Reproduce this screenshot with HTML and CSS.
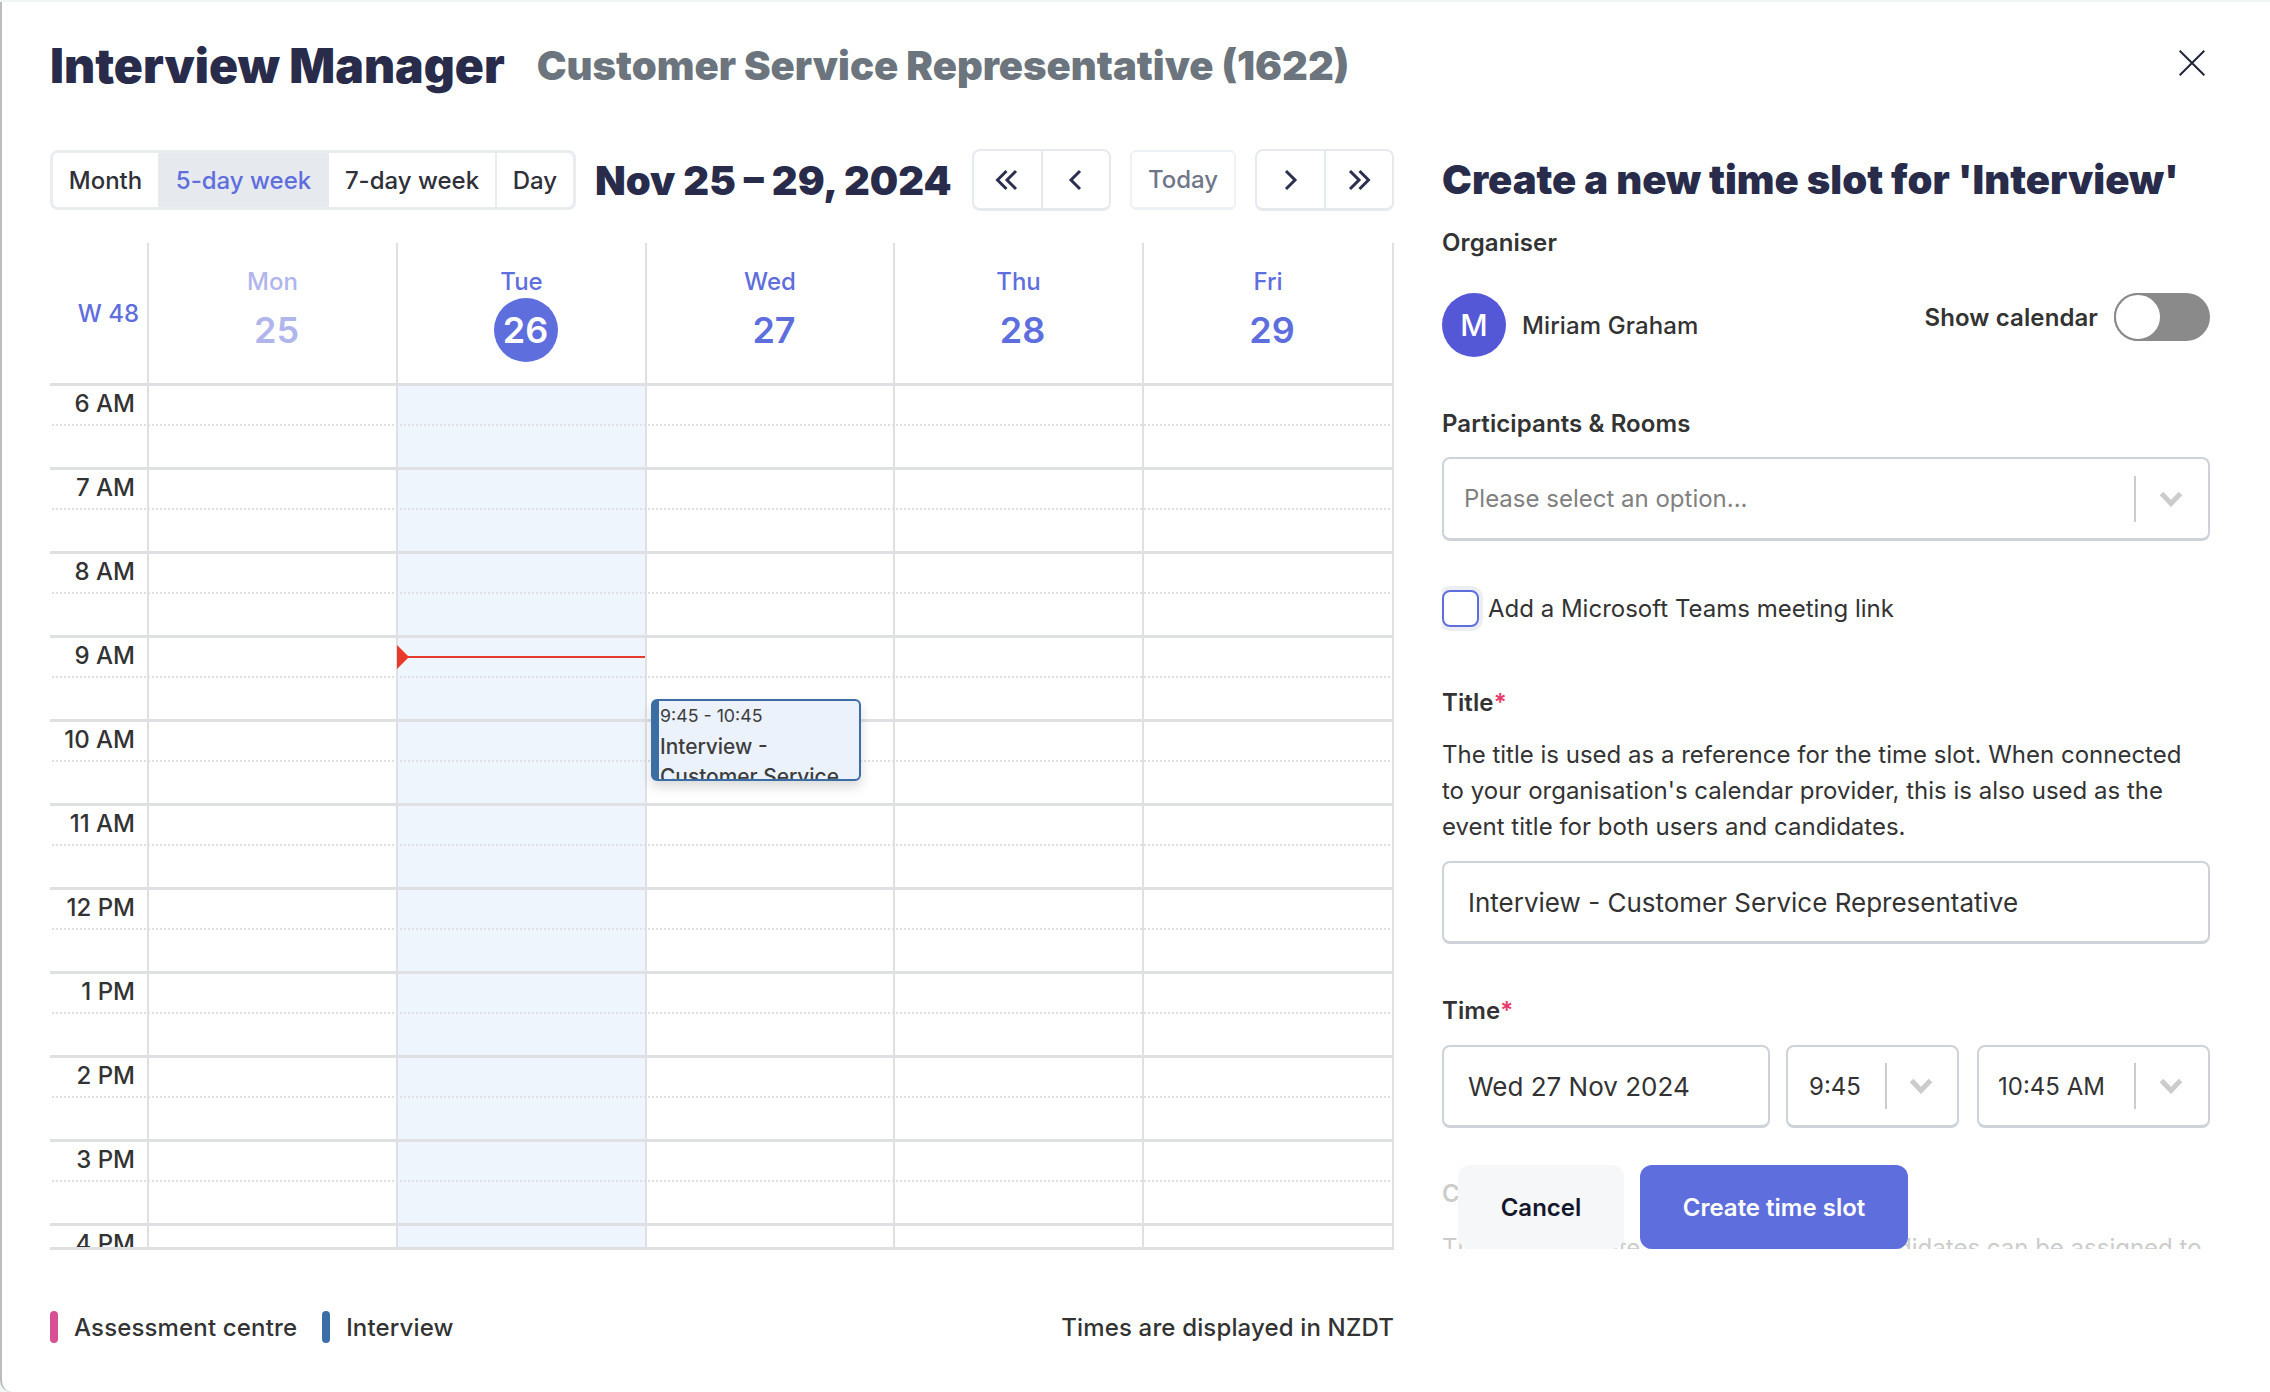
FILE: index.html
```html
<!DOCTYPE html>
<html lang="en">
<head>
<meta charset="utf-8">
<title>Interview Manager</title>
<link rel="stylesheet" href="styles.css">
</head>
<body>
<div class="modal">
  <header class="top">
    <h1 class="title">Interview Manager</h1>
    <span class="subtitle">Customer Service Representative (1622)</span>
    <button class="close" aria-label="Close">
      <svg viewBox="0 0 26 26" width="26" height="26"><path d="M.7.7 25.300 25.300M25.300.7.7 25.300" fill="none" stroke="#22263a" stroke-width="2"/></svg>
    </button>
  </header>
  <div class="content">
    <section class="left">
      <div class="toolbar">
        <div class="seg">
          <span class="seg-item seg-month">Month</span>
          <span class="seg-item seg-active">5-day week</span>
          <span class="seg-item seg-seven">7-day week</span>
          <span class="seg-item seg-day">Day</span>
        </div>
        <h2 class="range">Nov 25 – 29, 2024</h2>
        <div class="navs">
          <div class="nav">
            <span class="nav-btn"><svg viewBox="0 0 24 24" width="24" height="24"><path d="M11.500 3 2.500 12l9 9M21 3l-9 9 9 9" class="chev-dark"/></svg></span>
            <span class="nav-btn"><svg viewBox="0 0 24 24" width="24" height="24"><path d="m16 3-9 9 9 9" class="chev-dark"/></svg></span>
          </div>
          <span class="today">Today</span>
          <div class="nav">
            <span class="nav-btn"><svg viewBox="0 0 24 24" width="24" height="24"><path d="m8 3 9 9-9 9" class="chev-dark"/></svg></span>
            <span class="nav-btn"><svg viewBox="0 0 24 24" width="24" height="24"><path d="m3 3 9 9-9 9M12.500 3l9 9-9 9" class="chev-dark"/></svg></span>
          </div>
        </div>
      </div>
      <div class="cal">
        <div class="cal-head">
          <div class="week">W 48</div>
          <div class="day past"><span class="dname">Mon</span><span class="dnum">25</span></div>
          <div class="day"><span class="dname">Tue</span><span class="dnum now">26</span></div>
          <div class="day"><span class="dname">Wed</span><span class="dnum">27</span></div>
          <div class="day"><span class="dname">Thu</span><span class="dnum">28</span></div>
          <div class="day"><span class="dname">Fri</span><span class="dnum">29</span></div>
        </div>
        <div class="cal-body">
          <div class="row"><div class="hour">6 AM</div><div class="cell"></div><div class="cell tcol"></div><div class="cell"></div><div class="cell"></div><div class="cell"></div></div>
          <div class="row"><div class="hour">7 AM</div><div class="cell"></div><div class="cell tcol"></div><div class="cell"></div><div class="cell"></div><div class="cell"></div></div>
          <div class="row"><div class="hour">8 AM</div><div class="cell"></div><div class="cell tcol"></div><div class="cell"></div><div class="cell"></div><div class="cell"></div></div>
          <div class="row"><div class="hour">9 AM</div><div class="cell"></div><div class="cell tcol"></div><div class="cell"></div><div class="cell"></div><div class="cell"></div></div>
          <div class="row"><div class="hour">10 AM</div><div class="cell"></div><div class="cell tcol"></div><div class="cell"></div><div class="cell"></div><div class="cell"></div></div>
          <div class="row"><div class="hour">11 AM</div><div class="cell"></div><div class="cell tcol"></div><div class="cell"></div><div class="cell"></div><div class="cell"></div></div>
          <div class="row"><div class="hour">12 PM</div><div class="cell"></div><div class="cell tcol"></div><div class="cell"></div><div class="cell"></div><div class="cell"></div></div>
          <div class="row"><div class="hour">1 PM</div><div class="cell"></div><div class="cell tcol"></div><div class="cell"></div><div class="cell"></div><div class="cell"></div></div>
          <div class="row"><div class="hour">2 PM</div><div class="cell"></div><div class="cell tcol"></div><div class="cell"></div><div class="cell"></div><div class="cell"></div></div>
          <div class="row"><div class="hour">3 PM</div><div class="cell"></div><div class="cell tcol"></div><div class="cell"></div><div class="cell"></div><div class="cell"></div></div>
          <div class="row"><div class="hour">4 PM</div><div class="cell"></div><div class="cell tcol"></div><div class="cell"></div><div class="cell"></div><div class="cell"></div></div>
          <div class="nowline"></div>
          <div class="event">
            <div class="ev-time">9:45 - 10:45</div>
            <div class="ev-title">Interview - Customer Service Representative</div>
          </div>
        </div>
      </div>
      <footer class="legend">
        <span class="key"><i class="bar bar-pink"></i>Assessment centre</span>
        <span class="key"><i class="bar bar-blue"></i>Interview</span>
        <span class="tz">Times are displayed in NZDT</span>
      </footer>
    </section>
    <section class="right">
      <h2 class="form-title">Create a new time slot for 'Interview'</h2>
      <div class="label org-label">Organiser</div>
      <div class="org">
        <span class="avatar">M</span>
        <span class="org-name">Miriam Graham</span>
        <span class="show">Show calendar</span>
        <span class="toggle"><span class="knob"></span></span>
      </div>
      <div class="label part-label">Participants &amp; Rooms</div>
      <div class="field select">
        <span class="ph">Please select an option...</span>
        <span class="sep"></span>
        <svg class="chev" viewBox="0 0 24 16" width="24" height="16"><path d="m2.500 2.500 9.500 10 9.500-10"/></svg>
      </div>
      <label class="check"><span class="box"></span>Add a Microsoft Teams meeting link</label>
      <div class="label title-label">Title<span class="req">*</span></div>
      <p class="desc">The title is used as a reference for the time slot. When connected to your organisation's calendar provider, this is also used as the event title for both users and candidates.</p>
      <div class="field text-field">Interview - Customer Service Representative</div>
      <div class="label time-label">Time<span class="req">*</span></div>
      <div class="time-row">
        <div class="field date">Wed 27 Nov 2024</div>
        <div class="field start"><span class="val">9:45</span><span class="sep"></span><svg class="chev" viewBox="0 0 24 16" width="24" height="16"><path d="m2.500 2.500 9.500 10 9.500-10"/></svg></div>
        <div class="field end"><span class="val">10:45 AM</span><span class="sep"></span><svg class="chev" viewBox="0 0 24 16" width="24" height="16"><path d="m2.500 2.500 9.500 10 9.500-10"/></svg></div>
      </div>
      <div class="faded-head">Candidates</div>
      <p class="faded-text">The slot to create determines which candidates can be assigned to</p>
      <div class="actions">
        <button class="btn cancel">Cancel</button>
        <button class="btn create">Create time slot</button>
      </div>
    </section>
  </div>
</div>
</body>
</html>
```

FILE: styles.css
```css
* { box-sizing: border-box; }
html, body { margin: 0; padding: 0; }
body {
  width: 2270px;
  height: 1392px;
  overflow: hidden;
  background: #eef5f3;
  font-family: Inter, "Liberation Sans", sans-serif;
  color: #333;
}
.modal {
  width: 2270px;
  height: 1390px;
  margin-top: 2px;
  background: #fff;
  border-left: 2px solid #bdbdbd;
  border-bottom-left-radius: 12px;
  padding: 0 60px 0 48px;
  display: flex;
  flex-direction: column;
}
.top {
  height: 146px;
  padding-top: 38px;
  display: flex;
  align-items: flex-start;
  position: relative;
}
.title {
  margin: 0;
  font-size: 48px;
  line-height: 52px;
  font-weight: 900;
  color: #282c4a;
}
.subtitle {
  margin-left: 32px;
  font-size: 40px;
  line-height: 52px;
  font-weight: 900;
  color: #6c757d;
}
.close {
  position: absolute;
  left: 2129px;
  top: 48px;
  border: 0;
  padding: 0;
  background: none;
  line-height: 0;
}
.content {
  display: flex;
  gap: 48px;
  flex: 1;
  min-height: 0;
}
.left { width: 1344px; }
.toolbar {
  display: flex;
  align-items: center;
  height: 64px;
  margin-bottom: 31px;
}
.seg {
  display: flex;
  height: 60px;
  width: 526px;
  border: 3px solid #e9edf0;
  border-radius: 8px;
  overflow: hidden;
  font-size: 24px;
  font-weight: 500;
  color: #2f3038;
}
.seg-item { display: flex; align-items: center; justify-content: center; }
.seg-month { width: 105px; }
.seg-active { width: 171px; background: #e6eaee; color: #5f6edd; }
.seg-seven { width: 168px; border-right: 2px solid #e9edf0; }
.seg-day { flex: 1; }
.range {
  margin: 0 0 0 19px;
  font-size: 40px;
  font-weight: 900;
  color: #282c4a;
  white-space: nowrap;
}
.navs { margin-left: auto; display: flex; gap: 19px; align-items: center; }
.nav {
  display: flex;
  width: 139px;
  height: 62px;
  border: 2px solid #e6eaef;
  border-bottom-width: 3px;
  border-radius: 8px;
}
.nav-btn { flex: 1; display: flex; align-items: center; justify-content: center; }
.nav-btn + .nav-btn { border-left: 2px solid #e6eaef; }
.chev-dark { fill: none; stroke: #2c3050; stroke-width: 3; }
.today {
  width: 106px;
  height: 60px;
  border: 2px solid #eef1f5;
  border-bottom-width: 3px;
  border-radius: 6px;
  display: flex;
  align-items: center;
  justify-content: center;
  font-size: 24px;
  font-weight: 500;
  color: #70768a;
}
.cal-head {
  display: grid;
  grid-template-columns: 97px 249px 249px 248px 249px 252px;
  height: 140px;
}
.week {
  font-size: 24px;
  font-weight: 500;
  color: #5f6edd;
  text-align: right;
  padding: 56px 8px 0 0;
}
.day {
  border-left: 2px solid #dfe0e3;
  display: flex;
  flex-direction: column;
  align-items: center;
  padding-top: 24px;
  color: #5f6edd;
}
.day:last-child { border-right: 2px solid #dfe0e3; }
.past { color: #b0b5ec; }
.dname { font-size: 24px; line-height: 30px; font-weight: 500; }
.dnum {
  width: 64px;
  height: 64px;
  margin: 1px 0 0 8px;
  display: flex;
  align-items: center;
  justify-content: center;
  font-size: 36px;
  font-weight: 600;
  border-radius: 50%;
}
.now { background: #5f6edd; color: #fff; }
.cal-body {
  position: relative;
  height: 867px;
  overflow: hidden;
  border-bottom: 3px solid #dfe0e3;
}
.row {
  position: relative;
  display: grid;
  grid-template-columns: 97px 249px 249px 248px 249px 252px;
  height: 84px;
  border-top: 3px solid #dfe0e3;
}
.row::after {
  content: "";
  position: absolute;
  left: 2px;
  right: 0;
  top: 38px;
  border-top: 2px dotted #dfe0e3;
}
.hour {
  font-size: 24px;
  line-height: 30px;
  font-weight: 500;
  text-align: right;
  padding: 3px 12px 0 0;
  color: #333;
}
.cell { border-left: 2px solid #dfe0e3; }
.cell:last-child { border-right: 2px solid #dfe0e3; }
.tcol { background: #eef5fc; }
.nowline {
  position: absolute;
  left: 347px;
  top: 273px;
  width: 248px;
  height: 2px;
  background: #e8392a;
}
.nowline::before {
  content: "";
  position: absolute;
  left: 0;
  top: -11px;
  border-left: 12px solid #e8392a;
  border-top: 12px solid transparent;
  border-bottom: 12px solid transparent;
}
.event {
  position: absolute;
  left: 601px;
  top: 316px;
  width: 210px;
  height: 82px;
  background: #ebf2fc;
  border: 2px solid #3a6ea5;
  border-left-width: 8px;
  border-radius: 6px;
  box-shadow: 0 6px 12px rgba(0, 0, 0, .15);
  overflow: hidden;
  padding-left: 1px;
  color: #3d3d3d;
}
.ev-time { font-size: 17.800px; line-height: 26px; margin: 2px 0 3px; }
.ev-title { font-size: 20.900px; line-height: 30px; font-weight: 500; }
.legend {
  display: flex;
  align-items: center;
  margin-top: 61px;
  height: 32px;
  font-size: 24px;
  font-weight: 550;
  letter-spacing: .15px;
  color: #333;
}
.key { display: flex; align-items: center; margin-right: 25px; }
.bar { display: block; width: 8px; height: 32px; border-radius: 4px; margin-right: 16px; }
.bar-pink { background: #d84f94; }
.bar-blue { background: #3a6ea5; }
.tz { margin-left: auto; }
.right {
  position: relative;
  width: 768px;
  height: 1101px;
  overflow: hidden;
}
.form-title {
  margin: 0;
  height: 64px;
  font-size: 40px;
  line-height: 64px;
  font-weight: 900;
  color: #282c4a;
  white-space: nowrap;
}
.label {
  font-size: 24px;
  line-height: 30px;
  font-weight: 600;
  letter-spacing: .1px;
  color: #333;
}
.org-label { margin-top: 16px; }
.org { display: flex; margin-top: 35px; height: 64px; font-size: 24px; font-weight: 550; letter-spacing: .1px; }
.avatar {
  width: 64px;
  height: 64px;
  border-radius: 50%;
  background: #5558d6;
  color: #fff;
  font-size: 30px;
  font-weight: 500;
  display: flex;
  align-items: center;
  justify-content: center;
}
.org-name { margin: 18px 0 0 16px; line-height: 30px; }
.show { margin: 10px 16px 0 auto; line-height: 30px; font-weight: 600; }
.toggle {
  width: 96px;
  height: 48px;
  border-radius: 24px;
  background: #8a8a8a;
  display: block;
}
.knob {
  display: block;
  width: 48px;
  height: 48px;
  border-radius: 50%;
  background: #fff;
  border: 2px solid #8a8a8a;
}
.part-label { margin-top: 52px; }
.field {
  display: flex;
  align-items: center;
  border: 2px solid #cdd3d9;
  border-bottom-width: 3px;
  border-radius: 8px;
  background: #fff;
  font-size: 26px;
  color: #333;
}
.select { margin-top: 18px; height: 84px; padding: 0 0 0 20px; }
.ph { font-size: 24px; color: #808080; width: 670px; }
.sep { width: 2px; height: 46px; background: #ccc; }
.chev { margin-left: 22px; fill: none; stroke: #ccc; stroke-width: 5; }
.select .chev, .end .chev { margin-left: 23px; }
.check { display: flex; align-items: center; margin-top: 49px; height: 37px; font-size: 24px; color: #333; }
.box {
  width: 37px;
  height: 37px;
  margin-right: 9px;
  border: 2px solid #5f6edd;
  border-radius: 8px;
  box-shadow: 0 0 0 4px #eceef2;
}
.title-label { margin-top: 61px; }
.req { color: #e8396a; }
.desc { margin: 19px 0 0; font-size: 24px; line-height: 36px; color: #333; }
.text-field { margin-top: 16px; height: 83px; padding-left: 24px; }
.time-label { margin-top: 52px; }
.time-row { display: flex; margin-top: 19px; gap: 16px; }
.time-row .field { height: 83px; }
.date { width: 328px; padding-left: 24px; }
.start { width: 173px; padding-left: 21px; }
.start .val { width: 76px; font-size: 24px; }
.end { width: 233px; padding-left: 19px; margin-left: 2px; }
.end .val { width: 136px; font-size: 24px; }
.faded-head { margin-top: 51px; font-size: 24px; line-height: 30px; font-weight: 600; color: #ccc; }
.faded-text { margin: 21px 0 0; font-size: 24px; line-height: 36px; color: #ccc; white-space: nowrap; }
.actions {
  position: absolute;
  left: 16px;
  bottom: 0;
  display: flex;
  gap: 16px;
}
.btn {
  height: 84px;
  border: 0;
  border-radius: 12px;
  font-family: inherit;
  font-size: 24px;
  font-weight: 600;
}
.cancel { width: 166px; background: #f6f7f9; color: #14172b; }
.create { width: 268px; background: #5f6edd; color: #fff; }
```
